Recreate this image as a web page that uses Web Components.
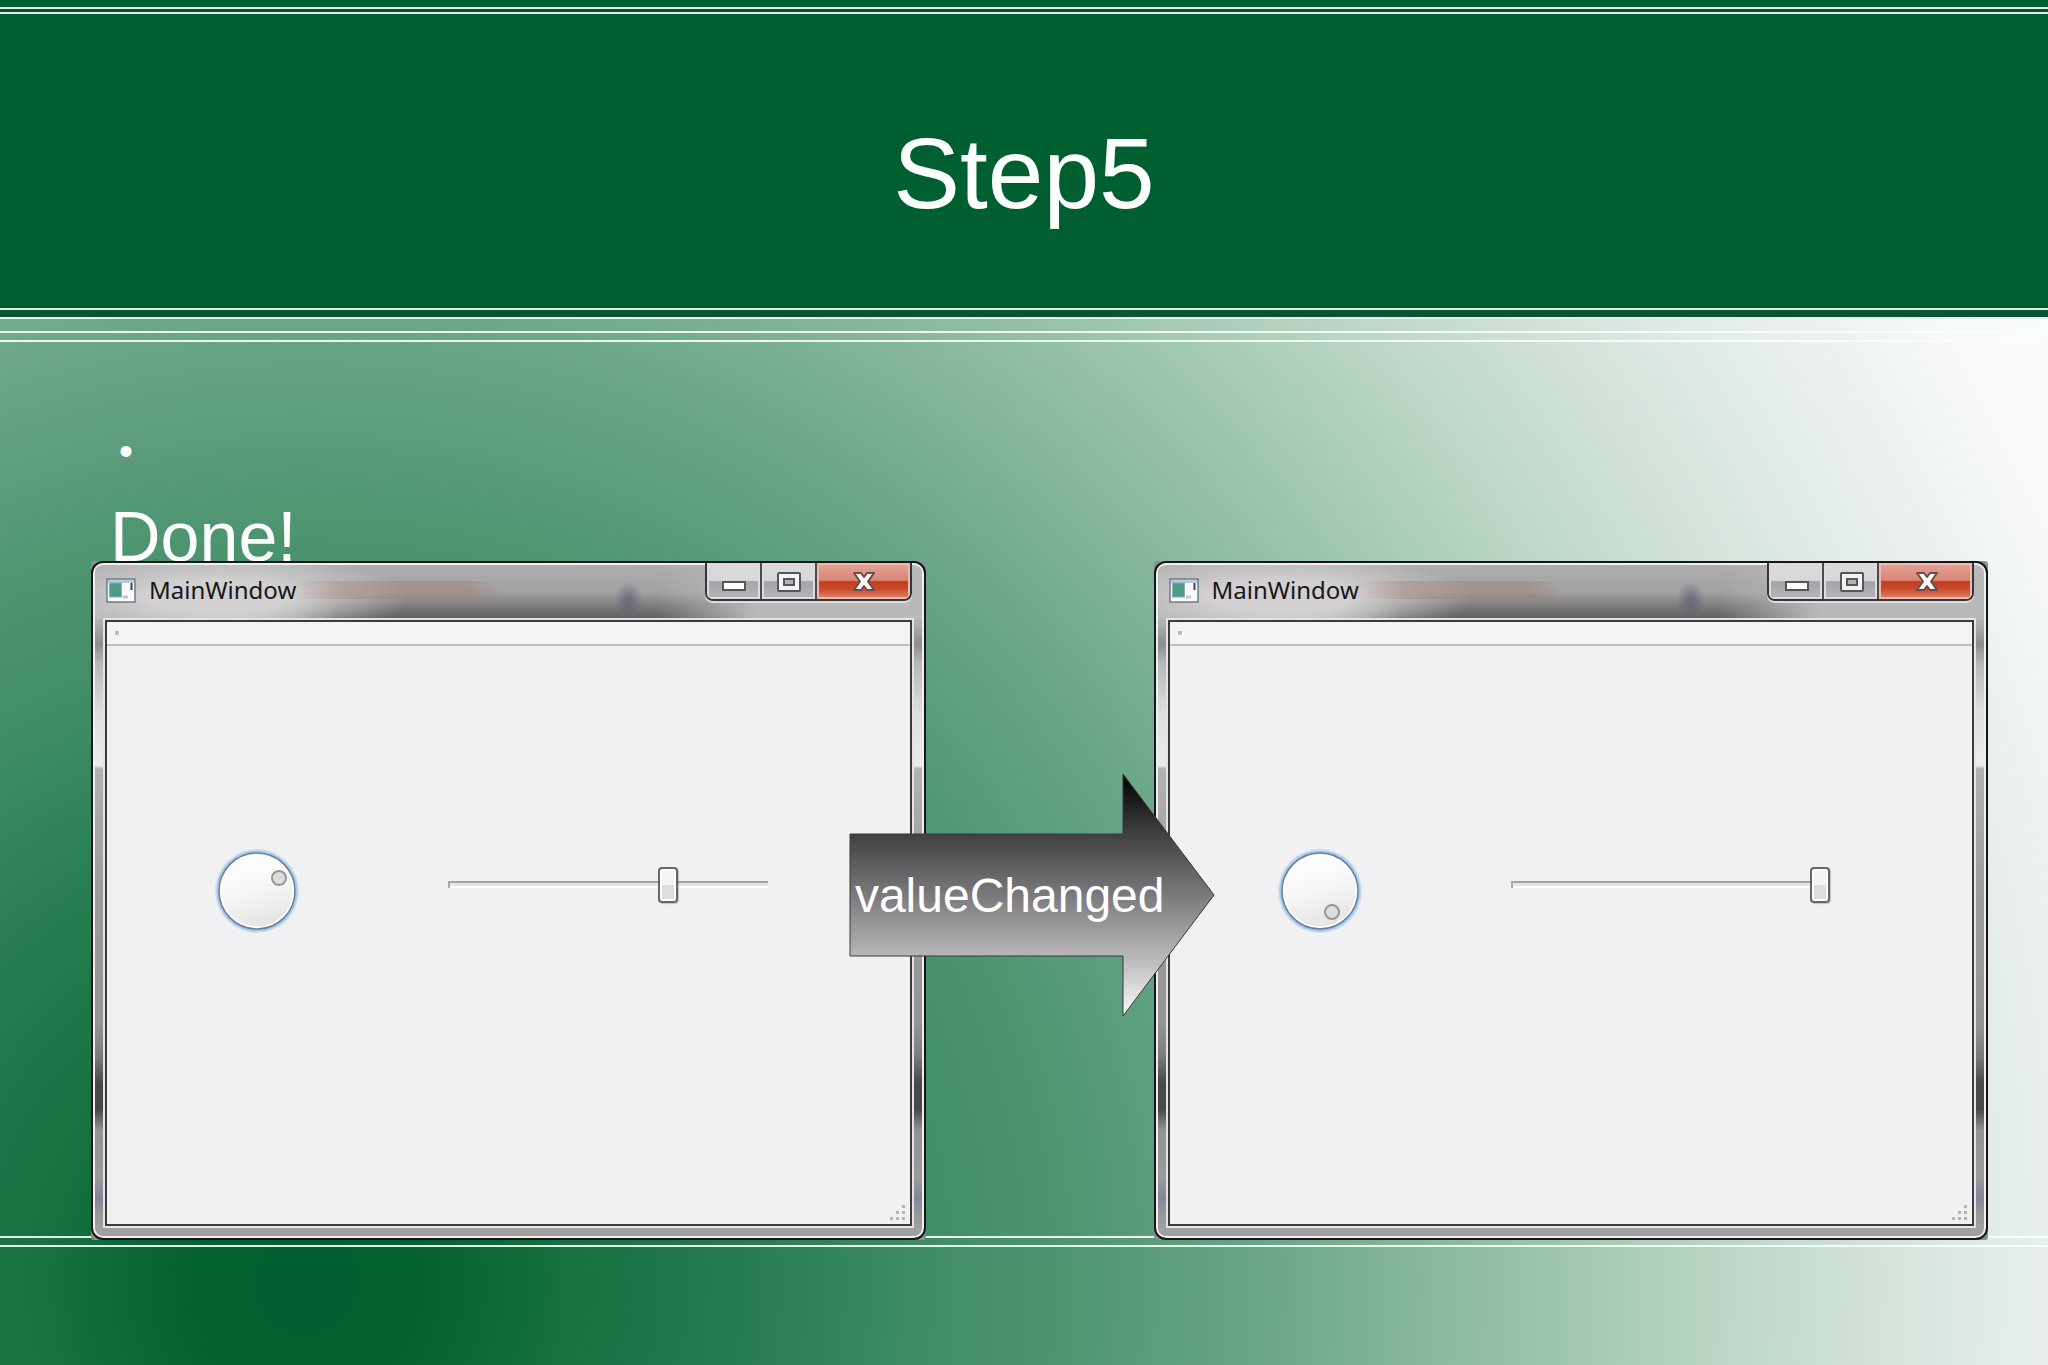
<!DOCTYPE html>
<html lang="en">
<head>
<meta charset="utf-8">
<title>Step5</title>
<style>
  body { margin: 0; font-family: "Liberation Sans", Arial, sans-serif; color: #fdfffc; }
</style>
</head>
<body>
<slide-page>
  <span slot="title">Step5</span>
  <slide-note slot="note">Done!</slide-note>
  <app-window slot="figure" caption="MainWindow">
    <rotary-dial knob-x="64" knob-y="29"></rotary-dial>
    <value-slider value="70"></value-slider>
  </app-window>
  <app-window slot="figure" caption="MainWindow">
    <rotary-dial knob-x="54" knob-y="63"></rotary-dial>
    <value-slider value="100"></value-slider>
  </app-window>
  <flow-arrow slot="overlay">valueChanged</flow-arrow>
</slide-page>

<script>
const attach = (el, html) => { el.attachShadow({ mode: "open" }).innerHTML = html; };

/* Two parallel hairlines; --gap and --weight set their rhythm. */
class DoubleRule extends HTMLElement {
  constructor() {
    super();
    attach(this, `
      <style>
        :host { display: block; border-block: var(--weight, 2px) solid #f6fffbe8; height: var(--gap, 3px);
                background: var(--between, transparent); background-clip: padding-box; }
      </style>`);
  }
}

class SlidePage extends HTMLElement {
  constructor() {
    super();
    attach(this, `
      <style>
        :host {
          display: flex; flex-direction: column; min-height: 100vh; overflow: hidden;
          background: radial-gradient(circle farthest-corner at 15% 94%,
            #005d2e 0%, #03612f 5%, #16703f 12%, #257c50 20%, #3d8c64 28%, #4b936f 34%,
            #65a386 43%, #7db196 49%, #a6cbb5 60%, #c4dbce 68%, #e2ebe6 78%, #f8f9fb 88%, #fdfdff 100%);
        }
        header { display: flex; flex-direction: column; background: #005f30; padding-top: 7px; }
        .top { --between: #124a31; }
        .bottom { --gap: 7px; --between: #0d5233; }
        h1 { margin: 102px 0 77px; font-size: 100px; line-height: 115px; font-weight: 400; text-align: center; }
        .under { --gap: 7px; margin-top: 12px; }
        main { flex: 1; display: flex; flex-direction: column; }
        .note { padding: 86px 110px 0; }
        .figure { position: relative; display: flex; gap: 228px; padding: 0 60px 0 91px; z-index: 1; }
        ::slotted(app-window) { flex: 1; }
        ::slotted(flow-arrow) { position: absolute; left: 41.45%; top: 31.2%; }
        .foot { --gap: 7px; margin-top: -4px; }
      </style>
      <header>
        <double-rule class="top"></double-rule>
        <h1><slot name="title"></slot></h1>
        <double-rule class="bottom"></double-rule>
      </header>
      <main>
        <double-rule class="under"></double-rule>
        <div class="note"><slot name="note"></slot></div>
        <div class="figure"><slot name="figure"></slot><slot name="overlay"></slot></div>
        <double-rule class="foot"></double-rule>
      </main>`);
  }
}

class SlideNote extends HTMLElement {
  constructor() {
    super();
    attach(this, `
      <style>
        :host { display: block; height: 133px; }
        .dot { padding-left: 9px; font-size: 40px; line-height: 46px; }
        p { margin: 23px 0 0; font-size: 70px; line-height: 80px; }
      </style>
      <div class="dot">•</div>
      <p><slot></slot></p>`);
  }
}

class AppWindow extends HTMLElement {
  constructor() {
    super();
    attach(this, `
      <style>
        :host { display: block; box-sizing: border-box; min-width: 0; aspect-ratio: 834 / 679; background:#8b918e; border-radius: 3px; }
        .frame {
          box-sizing: border-box; height: 100%; display: flex; flex-direction: column;
          border: 2px solid #161616; border-radius: 12px; padding: 0 12px 12px;
          box-shadow: inset 0 0 0 2px #f0f0f0;
          background:
            linear-gradient(#0000 calc(100% - 14px), #a09fa1 0),
            linear-gradient(#b5b5b5 0, #b0b0b0 9%, #8d8c90 12%, #b9b8ba 15%, #dedede 22%, #ececec 30%,
              #b2b2b2 30.5%, #9b9b9c 50%, #959595 68%, #7c7c7c 73%, #484848 77%, #484848 81%,
              #929292 84%, #9b9b9c 91%, #85859a 94%, #9b9b9c 97%);
        }
        .bar {
          display: flex; align-items: flex-start; flex: 0 0 57px; margin: 0 -10px; padding-left: 11px; box-sizing: border-box;
          border-radius: 9px 9px 0 0; border-top: 2px solid #f0f0f0; color: #16161a;
          background:
            radial-gradient(ellipse 14px 18px at 64.5% 62%, #55506f99, #55506f00),
            linear-gradient(90deg, #a0706800 24%, #a0706855 30% 45%, #a0706800 49%) 0 42% / 100% 18px no-repeat,
            radial-gradient(ellipse 190px 46px at 15% 58%, #d2d0d0 35%, #d2d0d000),
            linear-gradient(90deg, #b0b0b0 20%, #b0b0b000 29% 68%, #b9b9b9 80%),
            linear-gradient(#adadad 0, #a2a1a2 50%, #7c7a7b 75%, #5e5c5d 100%);
        }
        .icon { width: 30px; height: 25px; margin: 13px 13px 0 0; flex: none; }
        h2 { flex: 1; margin: 8px 0 0; font: 400 24px/34px "Noto Sans", sans-serif; }
        .buttons { display: flex; height: 38px; margin: -2px 10px 0 0; border: 2px solid #34343a; border-top: 0;
          box-sizing: border-box; border-radius: 0 0 8px 8px; overflow: hidden; filter: drop-shadow(0 2px 0 #dedede); }
        button { width: 55px; padding: 2px 0 0 2px; border: 0; border-right: 2px solid #4a4a4f; display: grid; place-items: center;
          background: linear-gradient(#d9d9da 0 48%, #a5a6a9 52%, #b4b5b8); box-shadow: inset 0 0 0 2px #dcdcdc; }
        button:last-child { width: 93px; border-right: 0;
          background: linear-gradient(#e4a49a, #d98575 48%, #c23c20 52%, #cb4a2c 72%, #dd8a74); box-shadow: inset 0 0 0 2px #f0b9ae; }
        svg { display: block; }
        .client { flex: 1; display: flex; flex-direction: column; min-height: 0; border: 2px solid #3b3b3f;
          box-sizing: border-box; outline: 2px solid #e4e4e4; background: #f1f0f3; }
        .tools { box-sizing: border-box; height: 24px; border-bottom: 2px solid #bfbfc2; padding: 9px 8px; background: #f4f3f6; }
        .tools i { display: block; width: 4px; height: 4px; background: #bdbdc0; box-shadow: 1px 1px #fff; }
        .content { flex: 1; display: flex; align-items: flex-start; gap: 149px; padding: 203px 142px 0 108px; min-height: 0; }
        .grip { align-self: flex-end; margin: 0 4px 3px 0; }
      </style>
      <div class="frame">
        <div class="bar">
          <svg class="icon" viewBox="0 0 30 25"><rect x="1" y="1" width="28" height="23" fill="#f8fafb" stroke="#6d7c84" stroke-width="1.5"/><rect x="2" y="2" width="26" height="3" fill="#b8cdd6"/><rect x="3.500" y="5" width="12" height="14" fill="#4f9a8b" stroke="#8badb5"/><path d="M25.500 5v7" stroke="#3c4450" stroke-width="2"/><path d="M17 19h5" stroke="#c4c8ca" stroke-width="3"/></svg>
          <h2></h2>
          <div class="buttons">
            <button aria-label="Minimize"><svg width="24" height="24" viewBox="0 0 24 24"><rect x="1" y="12" width="22" height="8" fill="#fff" stroke="#55555c" stroke-width="2"/></svg></button>
            <button aria-label="Maximize"><svg width="26" height="22" viewBox="0 0 26 22"><rect x="2" y="2" width="22" height="18" rx="1" fill="#f4f4f5" stroke="#55555c" stroke-width="2"/><rect x="8" y="8" width="10" height="6" fill="#b4b4b8" stroke="#55555c" stroke-width="2"/></svg></button>
            <button aria-label="Close"><svg width="24" height="22" viewBox="0 0 24 22"><path d="M2 2h7l3 4 3-4h7l-6 8.500 6 8.500h-7l-3-4-3 4H2l6-8.500z" fill="#fafafa" stroke="#6d4b4b" stroke-width="2" stroke-linejoin="round"/></svg></button>
          </div>
        </div>
        <div class="client">
          <div class="tools"><i></i></div>
          <div class="content"><slot></slot></div>
          <svg class="grip" width="16" height="18" viewBox="0 0 16 18" fill="#b4b4b8"><path d="M12 2h3v3h-3zM6 8h3v3H6zM12 8h3v3h-3zM0 14h3v3H0zM6 14h3v3H6zM12 14h3v3h-3z"/></svg>
        </div>
      </div>`);
  }
  connectedCallback() {
    this.shadowRoot.querySelector("h2").textContent = this.getAttribute("caption");
  }
}

class RotaryDial extends HTMLElement {
  connectedCallback() {
    if (this.shadowRoot) return;
    const x = this.getAttribute("knob-x"), y = this.getAttribute("knob-y");
    attach(this, `
      <style>:host { display: block; flex: none; } svg { display: block; }</style>
      <svg width="84" height="84" viewBox="0 0 84 84" role="img" aria-label="Dial">
        <defs>
          <linearGradient id="face" x1="0.3" y1="0" x2="0.6" y2="1"><stop offset="0" stop-color="#fff"/><stop offset=".5" stop-color="#f6f6f6"/><stop offset="1" stop-color="#e4e4e4"/></linearGradient>
        </defs>
        <circle cx="42" cy="42" r="42" fill="#cfe0f3"/>
        <circle cx="42" cy="42" r="40.500" fill="#a6c6ea"/>
        <circle cx="42" cy="42" r="38" fill="#fff" stroke="#6c7f98" stroke-width="1.500"/>
        <circle cx="42" cy="42" r="35.500" fill="url(#face)"/>
        <circle cx="${x}" cy="${y}" r="7" fill="#dcdddc" stroke="#979797" stroke-width="2"/>
      </svg>`);
  }
}

class ValueSlider extends HTMLElement {
  connectedCallback() {
    if (this.shadowRoot) return;
    attach(this, `
      <style>
        :host { display: block; flex: 1; min-width: 0; }
        input { -webkit-appearance: none; appearance: none; display: block; width: 100%; height: 70px; margin: 0; background: none; }
        input::-webkit-slider-runnable-track { height: 7px; box-sizing: border-box; border-left: 2px solid #a9a9ac;
          background: linear-gradient(#a4a3a7 0 2px, #e6e5e8 2px 5px, #fff 5px); }
        input::-webkit-slider-thumb { -webkit-appearance: none; width: 20px; height: 36px; margin-top: -14px;
          box-sizing: border-box; border: 2px solid #66666a; border-radius: 4px;
          background: linear-gradient(#f4f4f4 50%, #dededf 50%); box-shadow: inset 0 0 0 2px #fff, 1px 1px 1px #0003; }
      </style>
      <input type="range" min="0" max="100" value="${this.getAttribute("value")}" aria-label="Value">`);
  }
}

class FlowArrow extends HTMLElement {
  constructor() {
    super();
    attach(this, `
      <style>
        :host { display: grid; width: 366px; height: 244px; align-items: center; }
        svg, span { grid-area: 1 / 1; }
        span { padding: 2px 0 0 6px; font-size: 48px; line-height: 56px; color: #fff; }
      </style>
      <svg width="366" height="244" viewBox="0 0 366 244" aria-hidden="true">
        <defs><linearGradient id="shade" x1="0" y1="0" x2="0" y2="1"><stop offset="0" stop-color="#000"/><stop offset=".1" stop-color="#181818"/><stop offset=".25" stop-color="#424142"/><stop offset=".5" stop-color="#7a797b"/><stop offset=".75" stop-color="#b7b5b8"/><stop offset="1" stop-color="#fbfbfb"/></linearGradient></defs>
        <path d="M1 61H274V1L365 122 274 243V183H1z" fill="url(#shade)" stroke="#3a3a3a"/>
      </svg>
      <span><slot></slot></span>`);
  }
}

customElements.define("double-rule", DoubleRule);
customElements.define("slide-page", SlidePage);
customElements.define("slide-note", SlideNote);
customElements.define("app-window", AppWindow);
customElements.define("rotary-dial", RotaryDial);
customElements.define("value-slider", ValueSlider);
customElements.define("flow-arrow", FlowArrow);
</script>
</body>
</html>
